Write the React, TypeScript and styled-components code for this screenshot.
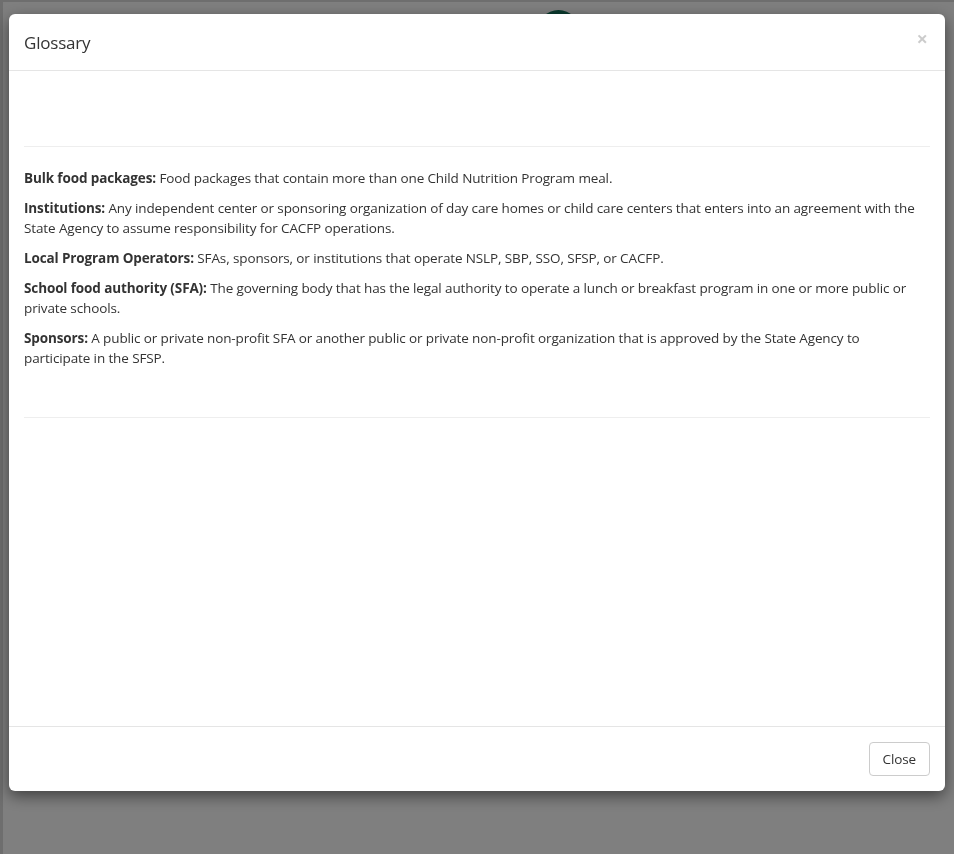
import styled, { createGlobalStyle } from "styled-components"

type Term = { name: string; text: string; wrapAt?: number }

const terms: Term[] = [
  { name: "Bulk food packages:", text: "Food packages that contain more than one Child Nutrition Program meal." },
  {
    name: "Institutions:",
    text: "Any independent center or sponsoring organization of day care homes or child care centers that enters into an agreement with the State Agency to assume responsibility for CACFP operations.",
  },
  { name: "Local Program Operators:", text: "SFAs, sponsors, or institutions that operate NSLP, SBP, SSO, SFSP, or CACFP." },
  {
    name: "School food authority (SFA):",
    text: "The governing body that has the legal authority to operate a lunch or breakfast program in one or more public or private schools.",
  },
  {
    name: "Sponsors:",
    text: "A public or private non-profit SFA or another public or private non-profit organization that is approved by the State Agency to participate in the SFSP.",
    wrapAt: 860,
  },
]

export default function App() {
  return (
    <>
      <GlobalStyle />
      <Page>
        <Logo />
      </Page>
      <Backdrop />
      <Overlay>
        <Dialog>
          <Header>
            <Title>Glossary</Title>
            <CloseX type="button" aria-label="Close">
              ×
            </CloseX>
          </Header>
          <Body>
            <Spacer />
            <Rule />
            <List>
              {terms.map((t, idx) => (
                <Entry key={idx} $max={t.wrapAt}>
                  <b>{t.name}</b> {t.text}
                </Entry>
              ))}
            </List>
            <Rule $top={49} />
          </Body>
          <Footer>
            <Button type="button">Close</Button>
          </Footer>
        </Dialog>
      </Overlay>
    </>
  )
}

const GlobalStyle = createGlobalStyle`
  html, body {
    margin: 0;
    height: 100%;
    background: #fff;
    font-family: "Segoe UI", "Open Sans", sans-serif;
    font-size: 13.5px;
    letter-spacing: -0.12px;
    line-height: 20px;
    color: #333;
  }
  * { box-sizing: border-box; }
`

const Page = styled.div`
  height: 854px;
  border-top: 2px solid #dcdcdc;
  border-left: 3px solid #dcdcdc;
  display: flex;
  justify-content: center;
  padding-left: 160px;
`

const Logo = styled.div`
  width: 43px;
  height: 43px;
  margin-top: 8px;
  border-radius: 50%;
  background: #14745c;
`

const Backdrop = styled.div`
  position: fixed;
  inset: 0;
  background: rgba(0, 0, 0, 0.5);
`

const Overlay = styled.div`
  position: fixed;
  inset: 0;
  padding: 14px 0 0 9px;
`

const Dialog = styled.div`
  width: 936px;
  height: 777px;
  display: flex;
  flex-direction: column;
  background: #fff;
  border-radius: 6px;
  box-shadow: 0 5px 15px rgba(0, 0, 0, 0.5);
`

const Header = styled.div`
  display: flex;
  justify-content: space-between;
  align-items: flex-start;
  height: 57px;
  padding: 16px 15px 14px;
  border-bottom: 1px solid #e5e5e5;
`

const Title = styled.h4`
  margin: 0;
  font-size: 17px;
  letter-spacing: -0.2px;
  font-weight: 400;
  line-height: 25px;
`

const CloseX = styled.button`
  margin: -1px 2px 0 0;
  padding: 0;
  border: 0;
  background: transparent;
  font-family: inherit;
  font-size: 20px;
  font-weight: 700;
  line-height: 1;
  color: #000;
  opacity: 0.2;
  cursor: pointer;
`

const Body = styled.div`
  flex: 1;
  padding: 15px;
`

const Spacer = styled.div`
  height: 40px;
`

const Rule = styled.hr<{ $top?: number }>`
  margin: ${(p) => p.$top ?? 20}px 0 20px;
  border: 0;
  border-top: 1px solid #eee;
`

const List = styled.div`
  padding-top: 1px;
  display: flex;
  flex-direction: column;
  gap: 10px;
`

const Entry = styled.p<{ $max?: number }>`
  margin: 0;
  max-width: ${(p) => (p.$max ? `${p.$max}px` : "none")};

  b {
    font-weight: 700;
  }
`

const Footer = styled.div`
  display: flex;
  justify-content: flex-end;
  padding: 15px;
  border-top: 1px solid #e5e5e5;
`

const Button = styled.button`
  height: 34px;
  padding: 0 13px 1px;
  font-family: inherit;
  font-size: 13.5px;
  letter-spacing: -0.12px;
  line-height: 20px;
  color: #333;
  background: #fff;
  border: 1px solid #ccc;
  border-radius: 4px;
  cursor: pointer;
`
